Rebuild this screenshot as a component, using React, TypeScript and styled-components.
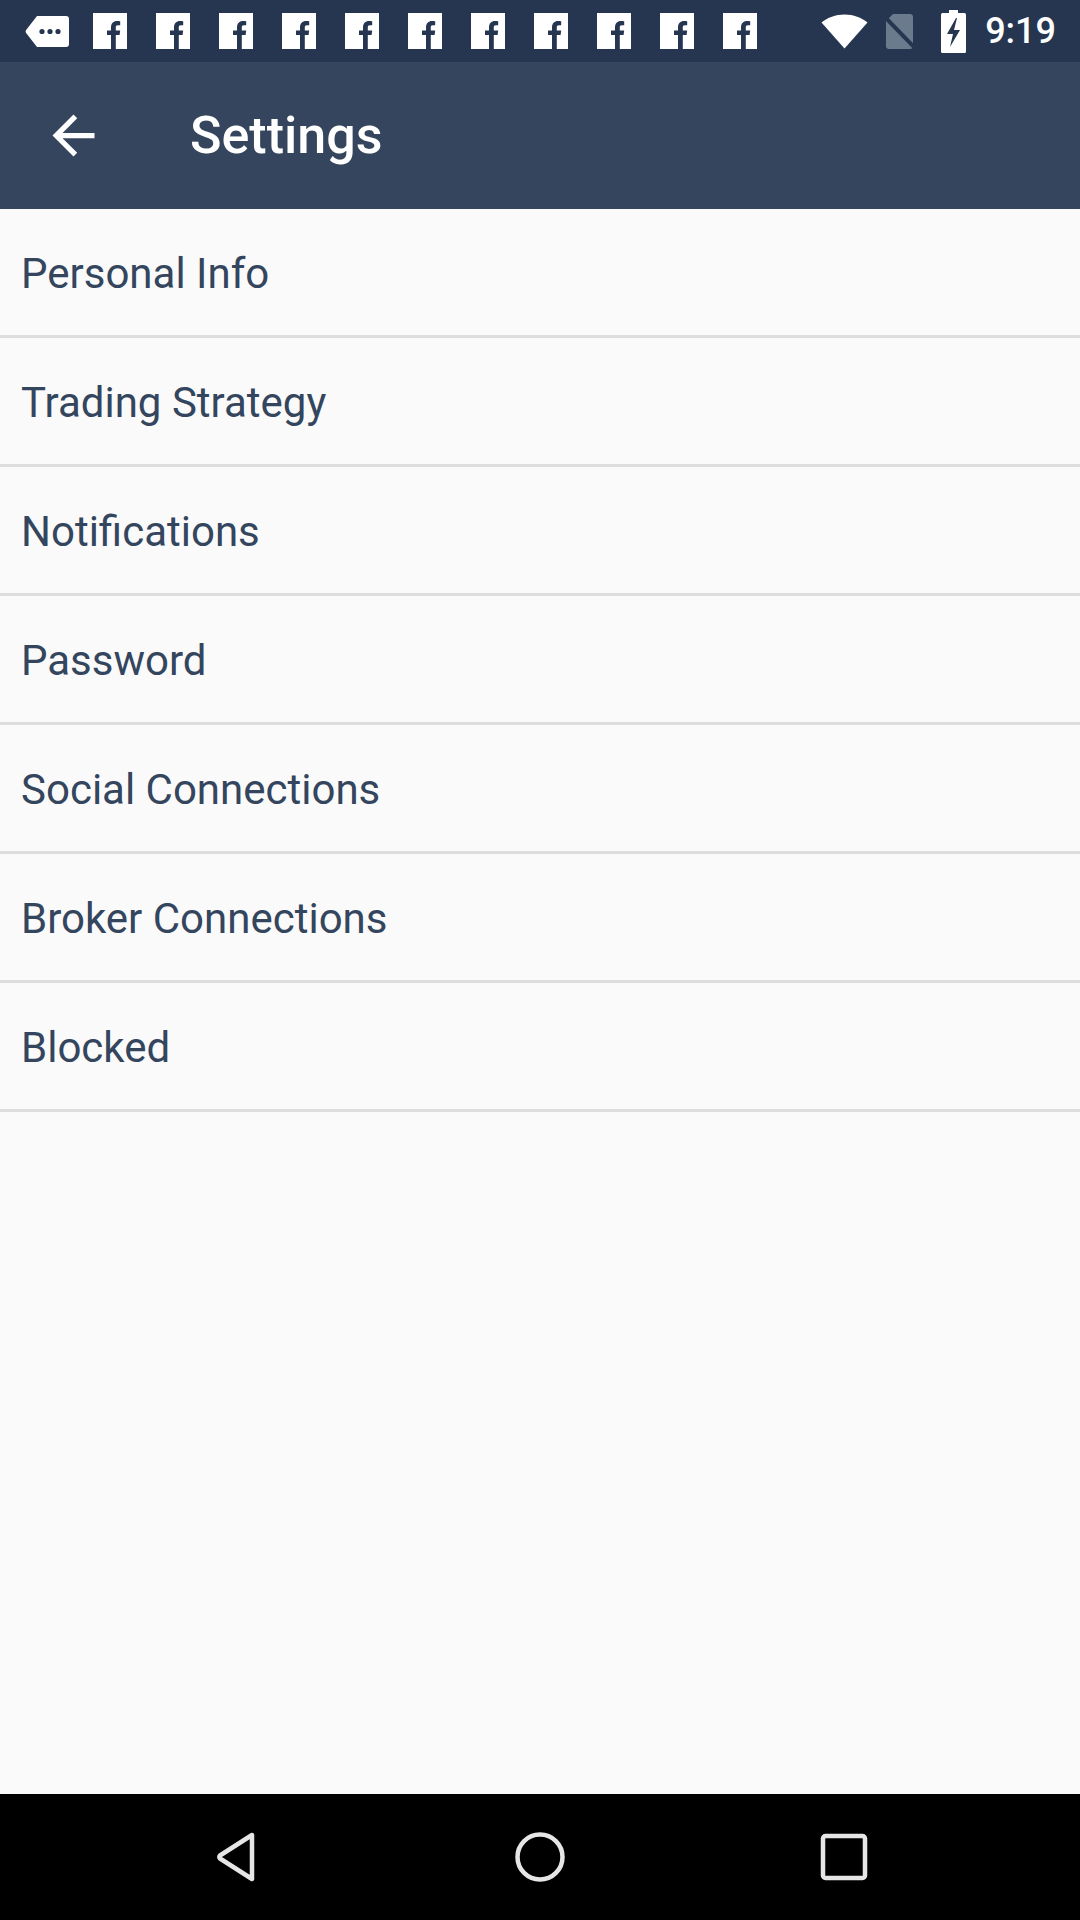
import React from "react";
import styled, { createGlobalStyle } from "styled-components";

const GlobalStyle = createGlobalStyle`
  html, body { margin: 0; padding: 0; background: #fafafa; }
  body { font-family: Roboto, "Noto Sans", "Liberation Sans", sans-serif; }
  * { box-sizing: border-box; }
`;

const Screen = styled.div`
  width: 1080px;
  height: 1920px;
  display: flex;
  flex-direction: column;
  background: #fafafa;
  overflow: hidden;
`;

const StatusBar = styled.div`
  height: 62px;
  flex: none;
  background: #263650;
  display: flex;
  align-items: center;
  padding: 0 24px 0 25px;
`;

const NotifGroup = styled.div`
  display: flex;
  align-items: center;
  gap: 29px;
  flex: 1;
`;

const NotifTag = styled.svg`
  width: 45px;
  height: 33px;
  margin-right: -6px;
`;

const FbIcon = styled.svg`
  width: 34px;
  height: 36px;
  display: block;
`;

const SysGroup = styled.div`
  display: flex;
  align-items: center;
`;

const SysIcon = styled.svg<{ $ml: number }>`
  display: block;
  margin-left: ${(p) => p.$ml}px;
`;

const Clock = styled.span`
  margin-left: 19px;
  color: #ffffff;
  font-size: 36px;
  font-weight: 500;
  letter-spacing: 0;
  line-height: 1;
`;

const AppBar = styled.header`
  height: 147px;
  flex: none;
  background: #34455d;
  display: flex;
  align-items: center;
  padding-left: 42px;
`;

const BackButton = styled.svg`
  width: 63px;
  height: 63px;
  display: block;
  flex: none;
`;

const Title = styled.h1`
  margin: 0 0 0 85px;
  color: #ffffff;
  font-size: 52px;
  font-weight: 500;
  line-height: 1;
`;

const List = styled.div`
  flex: 1;
  display: flex;
  flex-direction: column;
  background: #fafafa;
`;

const Row = styled.div`
  height: 129px;
  flex: none;
  display: flex;
  align-items: center;
  padding: 2px 0 0 21px;
  border-bottom: 3px solid #dddddd;
  color: #34455e;
  font-size: 42px;
  font-weight: 400;
`;

const NavBar = styled.nav`
  height: 126px;
  flex: none;
  background: #000000;
  display: flex;
  justify-content: center;
  align-items: center;
`;

const NavButton = styled.div`
  width: 304px;
  display: flex;
  justify-content: center;
  align-items: center;
`;

const items = [
  "Personal Info",
  "Trading Strategy",
  "Notifications",
  "Password",
  "Social Connections",
  "Broker Connections",
  "Blocked",
];

const Fb = () => (
  <FbIcon viewBox="0 0 34 36">
    <rect x="0" y="0" width="34" height="36" fill="#ffffff" />
    <path
      d="M18 36V22h-4v-4.5h4v-3.2c0-4 2.4-6.3 6-6.3 1.5 0 2.8.1 3.2.2v4h-2.2c-1.8 0-2.2.9-2.2 2.1v3.2h4.4l-.6 4.5h-3.8V36z"
      fill="#263650"
    />
  </FbIcon>
);

export default function App() {
  return (
    <>
      <GlobalStyle />
      <Screen>
        <StatusBar>
          <NotifGroup>
            <NotifTag viewBox="0 0 45 33">
              <path
                d="M12 1h29a3 3 0 0 1 3 3v25a3 3 0 0 1-3 3H12L1.5 18.5a3 3 0 0 1 0-4z"
                fill="#ffffff"
              />
              <circle cx="17" cy="16.5" r="2.6" fill="#263650" />
              <circle cx="25" cy="16.5" r="2.6" fill="#263650" />
              <circle cx="33" cy="16.5" r="2.6" fill="#263650" />
            </NotifTag>
            {Array.from({ length: 11 }).map((_, i) => (
              <Fb key={i} />
            ))}
          </NotifGroup>
          <SysGroup>
            <SysIcon $ml={0} width="47" height="35" viewBox="0 0 47 35">
              <path d="M0.5 8.5C6.5 3.5 14.5 0.5 23.5 0.5S40.5 3.5 46.5 8.5L23.5 34.5z" fill="#ffffff" />
            </SysIcon>
            <SysIcon $ml={15} width="33" height="36" viewBox="0 0 33 36">
              <path d="M10 1h17a3 3 0 0 1 3 3v29a3 3 0 0 1-3 3H6a3 3 0 0 1-3-3V8z" fill="#6b7a8d" />
              <path d="M-1 1L32 35" stroke="#263650" strokeWidth="4" />
            </SysIcon>
            <SysIcon $ml={25} width="25" height="43" viewBox="0 0 25 43">
              <rect x="8" y="0" width="9" height="4" fill="#ffffff" />
              <rect x="0" y="3" width="25" height="40" rx="1.5" fill="#ffffff" />
              <path d="M15 8L6 24h6l-3 13 10-17h-6l3-12z" fill="#263650" />
            </SysIcon>
            <Clock>9:19</Clock>
          </SysGroup>
        </StatusBar>
        <AppBar>
          <BackButton viewBox="0 0 24 24">
            <path
              d="M20 11H7.83l5.59-5.59L12 4l-8 8 8 8 1.41-1.41L7.83 13H20v-2z"
              fill="#ffffff"
            />
          </BackButton>
          <Title>Settings</Title>
        </AppBar>
        <List>
          {items.map((t) => (
            <Row key={t}>{t}</Row>
          ))}
        </List>
        <NavBar>
          <NavButton>
            <svg width="46" height="52" viewBox="0 0 46 52">
              <path
                d="M39 4L7 24.5a2 2 0 0 0 0 3L39 48z"
                fill="none"
                stroke="#e6e6e6"
                strokeWidth="4.5"
                strokeLinejoin="round"
              />
            </svg>
          </NavButton>
          <NavButton>
            <svg width="52" height="52" viewBox="0 0 52 52">
              <circle cx="26" cy="26" r="22.5" fill="none" stroke="#e6e6e6" strokeWidth="4.5" />
            </svg>
          </NavButton>
          <NavButton>
            <svg width="48" height="48" viewBox="0 0 48 48">
              <rect x="3" y="3" width="42" height="42" rx="2.5" fill="none" stroke="#e6e6e6" strokeWidth="4.5" />
            </svg>
          </NavButton>
        </NavBar>
      </Screen>
    </>
  );
}
